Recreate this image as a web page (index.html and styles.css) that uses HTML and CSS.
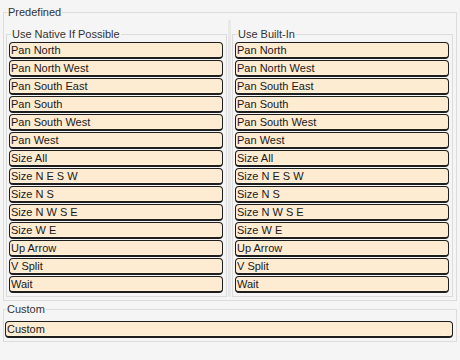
FILE: index.html
```html
<!DOCTYPE html>
<html lang="en">
<head>
    <meta charset="UTF-8">
    <title>Cursors</title>
    <link rel="stylesheet" href="styles.css">
</head>
<body>
    <div class="page">
        <!-- Predefined cursors -->
        <fieldset class="group predefined">
            <legend>Predefined</legend>
            <div class="columns">
                <fieldset class="group column">
                    <legend>Use Native If Possible</legend>
                    <button class="cursor-btn">Pan North</button>
                    <button class="cursor-btn">Pan North West</button>
                    <button class="cursor-btn">Pan South East</button>
                    <button class="cursor-btn">Pan South</button>
                    <button class="cursor-btn">Pan South West</button>
                    <button class="cursor-btn">Pan West</button>
                    <button class="cursor-btn">Size All</button>
                    <button class="cursor-btn">Size N E S W</button>
                    <button class="cursor-btn">Size N S</button>
                    <button class="cursor-btn">Size N W S E</button>
                    <button class="cursor-btn">Size W E</button>
                    <button class="cursor-btn">Up Arrow</button>
                    <button class="cursor-btn">V Split</button>
                    <button class="cursor-btn">Wait</button>
                </fieldset>
                <div class="splitter"></div>
                <fieldset class="group column">
                    <legend>Use Built-In</legend>
                    <button class="cursor-btn">Pan North</button>
                    <button class="cursor-btn">Pan North West</button>
                    <button class="cursor-btn">Pan South East</button>
                    <button class="cursor-btn">Pan South</button>
                    <button class="cursor-btn">Pan South West</button>
                    <button class="cursor-btn">Pan West</button>
                    <button class="cursor-btn">Size All</button>
                    <button class="cursor-btn">Size N E S W</button>
                    <button class="cursor-btn">Size N S</button>
                    <button class="cursor-btn">Size N W S E</button>
                    <button class="cursor-btn">Size W E</button>
                    <button class="cursor-btn">Up Arrow</button>
                    <button class="cursor-btn">V Split</button>
                    <button class="cursor-btn">Wait</button>
                </fieldset>
            </div>
        </fieldset>

        <!-- Custom cursor -->
        <fieldset class="group custom">
            <legend>Custom</legend>
            <button class="cursor-btn">Custom</button>
        </fieldset>
    </div>
</body>
</html>
```

FILE: styles.css
```css
* {
    margin: 0;
    padding: 0;
    box-sizing: border-box;
}

body {
    font-family: 'Liberation Sans', Arial, sans-serif;
    font-size: 11px;
    background-color: #f5f5f5;
    color: #222;
}

.page {
    padding: 6px 3px 0 3px;
}

/* Group boxes */
.group {
    border: 1px solid #dcdcdc;
    min-width: 0;
}

.group legend {
    font-size: 11px;
    line-height: 13px;
    color: #333;
    padding: 0 1px;
    margin-left: 1px;
}

.predefined {
    padding: 9px 3px 3px 2px;
}

.columns {
    display: flex;
}

.column {
    width: 221px;
    display: flex;
    flex-direction: column;
    gap: 1px;
    padding: 1px 3px 3px 2px;
}

.column legend {
    margin-left: 2px;
}

.splitter {
    width: 5px;
    margin-top: -8px;
    border-left: 1px solid transparent;
    border-right: 1px solid transparent;
    background-color: #e8e8e8;
    background-clip: content-box;
}

.custom {
    margin-top: 2px;
    padding: 5px 3px 3px 1px;
}

/* Cursor buttons */
.cursor-btn {
    position: relative;
    display: block;
    width: 100%;
    height: 17px;
    padding: 0 0 0 1px;
    font-family: 'Liberation Sans', Arial, sans-serif;
    font-size: 11px;
    line-height: 14px;
    color: #1a1a1a;
    text-align: left;
    background-color: #fdebd2;
    border: 1px solid #1e1e1e;
    border-bottom-width: 2px;
    border-radius: 4px;
}

.cursor-btn::after {
    content: "";
    position: absolute;
    left: 6px;
    right: 6px;
    bottom: 0;
    border-bottom: 1px dotted #fffaf2;
}
```
